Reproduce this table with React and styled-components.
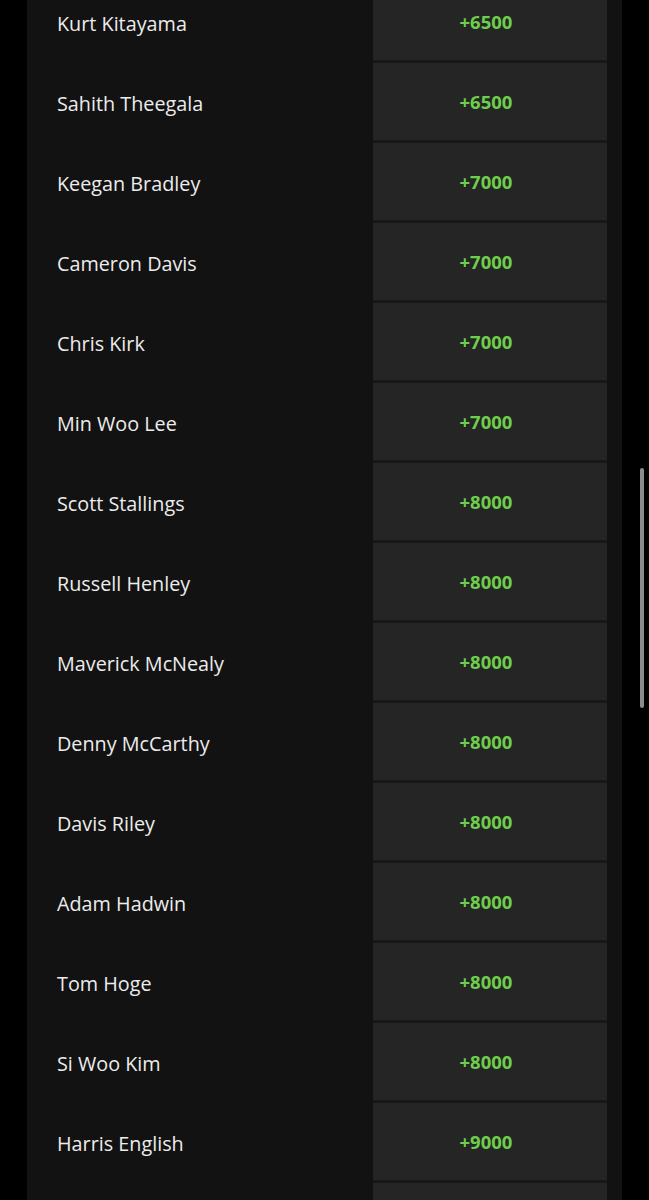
import React from 'react';
import styled, { createGlobalStyle } from 'styled-components';

const GlobalStyle = createGlobalStyle`
  html, body {
    margin: 0;
    padding: 0;
    background: #000;
    overflow: hidden;
  }
  body {
    font-family: 'Open Sans', 'Noto Sans', sans-serif;
  }
`;

const Screen = styled.div`
  position: relative;
  width: 649px;
  height: 1200px;
  background: #000;
  overflow: hidden;
`;

// list is scrolled a bit, so the first row is cut at the top
const Panel = styled.div`
  width: 595px;
  margin-left: 27px;
  margin-top: -17px;
  background: #121212;
  padding-right: 15px;
  box-sizing: border-box;
  min-height: 1260px;
`;

const Row = styled.div`
  display: grid;
  grid-template-columns: 346px 234px;
  height: 80px;
`;

const Name = styled.div`
  display: flex;
  align-items: center;
  padding-left: 30px;
  padding-top: 1px;
  font-size: 19.8px;
  color: #ececec;
`;

const OddsCell = styled.div`
  display: flex;
  align-items: center;
  justify-content: center;
  height: 80px;
  padding-right: 8px;
  padding-bottom: 1px;
  box-sizing: border-box;
  background: #252525;
  border-bottom: 3px solid #181818;
  font-size: 18.5px;
  font-weight: 700;
  color: #6dce4c;
`;

const Scrollbar = styled.div`
  position: absolute;
  left: 640px;
  top: 468px;
  width: 4px;
  height: 240px;
  border-radius: 2px;
  background: #8b8b8b;
`;

const players = [
  ['Kurt Kitayama', '+6500'],
  ['Sahith Theegala', '+6500'],
  ['Keegan Bradley', '+7000'],
  ['Cameron Davis', '+7000'],
  ['Chris Kirk', '+7000'],
  ['Min Woo Lee', '+7000'],
  ['Scott Stallings', '+8000'],
  ['Russell Henley', '+8000'],
  ['Maverick McNealy', '+8000'],
  ['Denny McCarthy', '+8000'],
  ['Davis Riley', '+8000'],
  ['Adam Hadwin', '+8000'],
  ['Tom Hoge', '+8000'],
  ['Si Woo Kim', '+8000'],
  ['Harris English', '+9000'],
  ['', ''],
];

const App = () => {
  return (
    <>
      <GlobalStyle />
      <Screen>
        <Panel>
          {players.map(([name, odds], i) => (
            <Row key={i}>
              <Name>{name}</Name>
              <OddsCell>{odds}</OddsCell>
            </Row>
          ))}
        </Panel>
        <Scrollbar />
      </Screen>
    </>
  );
};

export default App;
